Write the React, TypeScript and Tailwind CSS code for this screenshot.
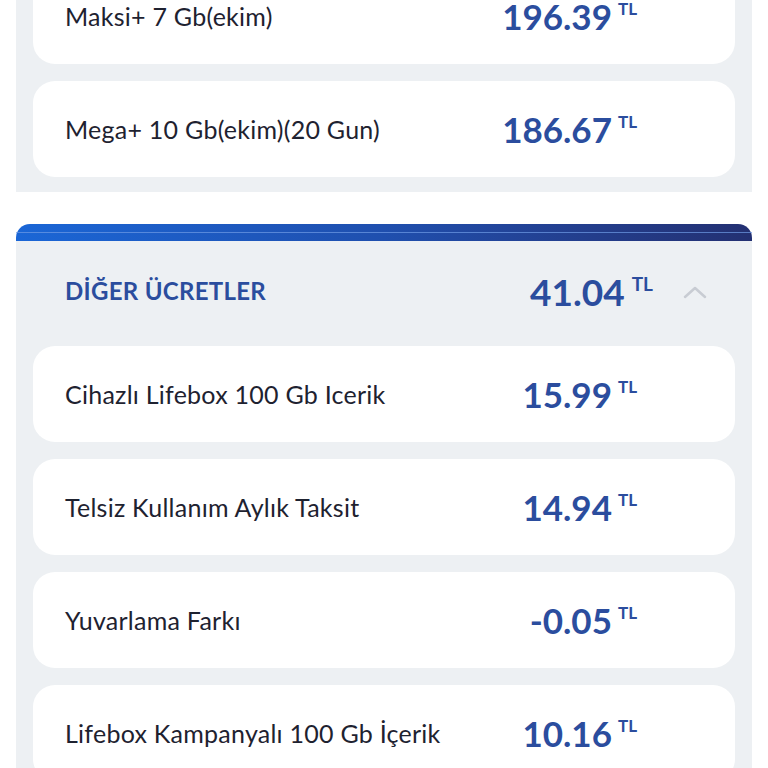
const font = { fontFamily: "Lato, 'Noto Sans', sans-serif" };

type Row = { label: string; amount: string };

const topRows: Row[] = [
  { label: "Maksi+ 7 Gb(ekim)", amount: "196.39" },
  { label: "Mega+ 10 Gb(ekim)(20 Gun)", amount: "186.67" },
];

const otherRows: Row[] = [
  { label: "Cihazlı Lifebox 100 Gb Icerik", amount: "15.99" },
  { label: "Telsiz Kullanım Aylık Taksit", amount: "14.94" },
  { label: "Yuvarlama Farkı", amount: "-0.05" },
  { label: "Lifebox Kampanyalı 100 Gb İçerik", amount: "10.16" },
];

function Amount({ value, big }: { value: string; big?: boolean }) {
  return (
    <div className="flex items-start text-[#2b4d9e]">
      <span
        className={
          big
            ? "text-[37px] font-bold leading-none"
            : "text-[35px] font-bold leading-none"
        }
      >
        {value}
      </span>
      <span
        className={
          big
            ? "ml-[7px] mt-[1px] text-[19px] font-bold leading-none"
            : "ml-[6px] mt-[1px] text-[17px] font-bold leading-none"
        }
      >
        TL
      </span>
    </div>
  );
}

function ChargeCard({ label, amount }: Row) {
  return (
    <div className="flex h-[96px] shrink-0 items-center rounded-[22px] bg-white pl-[32px] pr-[98px]">
      <span className="flex-1 text-[25px] leading-none tracking-[0.25px] text-[#1e2230]">{label}</span>
      <Amount value={amount} />
    </div>
  );
}

export default function App() {
  return (
    <div className="h-[768px] w-[768px] overflow-hidden bg-white" style={font}>
      {/* onceki bolum, ustte kesik */}
      <div className="mx-4 -mt-[32px] flex flex-col gap-[17px] bg-[#edf0f3] px-[17px] pb-[15px]">
        {topRows.map((r) => (
          <ChargeCard key={r.label} {...r} />
        ))}
      </div>

      <div className="mx-4 mt-[32px]">
        <div className="relative h-[17px] rounded-t-[14px] bg-gradient-to-r from-[#1a66d6] via-[#1f4fae] to-[#233072]">
          <div className="absolute inset-x-0 top-[8px] h-[1px] bg-[#6f9be6] opacity-70" />
        </div>
        <div className="bg-[#edf0f3] px-[17px]">
          <div className="flex h-[100px] items-center pl-[32px] pr-[28px]">
            <span className="flex-1 text-[24px] font-bold leading-none tracking-[0.3px] text-[#2b4d9e]">
              DİĞER ÜCRETLER
            </span>
            <Amount value="41.04" big />
            <svg
              className="ml-[30px] mt-[1px]"
              width="24"
              height="14"
              viewBox="0 0 24 14"
              fill="none"
              stroke="#c8ccd3"
              strokeWidth="2.5"
              strokeLinecap="round"
              strokeLinejoin="round"
            >
              <path d="M2 12 L12 3 L22 12" />
            </svg>
          </div>
          <div className="flex flex-col gap-[17px] pt-[5px] pb-4">
            {otherRows.map((r) => (
              <ChargeCard key={r.label} {...r} />
            ))}
          </div>
        </div>
      </div>
    </div>
  );
}
